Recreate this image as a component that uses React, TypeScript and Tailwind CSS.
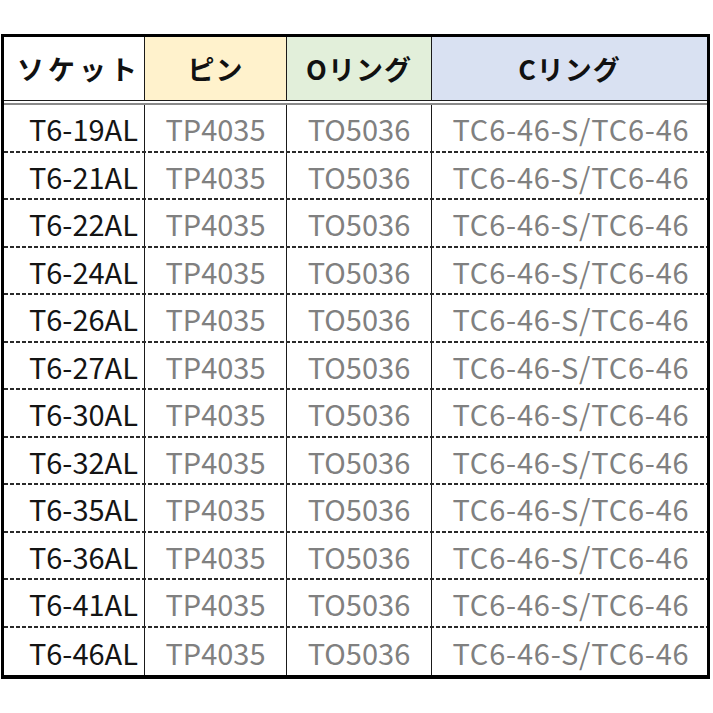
const SOCKETS = [
  'T6-19AL',
  'T6-21AL',
  'T6-22AL',
  'T6-24AL',
  'T6-26AL',
  'T6-27AL',
  'T6-30AL',
  'T6-32AL',
  'T6-35AL',
  'T6-36AL',
  'T6-41AL',
  'T6-46AL',
]

const PIN = 'TP4035'
const O_RING = 'TO5036'
const C_RING = 'TC6-46-S/TC6-46'

const FONT = "font-['Noto_Sans_CJK_JP','Noto_Sans',sans-serif]"

function DashLine() {
  return <div className="h-[2px] w-full shrink-0 bg-[repeating-linear-gradient(90deg,#2a2a2a_0px,#2a2a2a_4px,transparent_4px,transparent_6px)]" />
}

export default function App() {
  return (
    <div className={`h-[713px] w-[713px] bg-white pt-[34px] pl-[1px] ${FONT}`}>
      <div className="flex h-[645px] w-[709px] flex-col border-[3px] border-b-4 border-black bg-white">
        {/* header */}
        <div className="flex h-[64px] shrink-0 border-b border-[#1e1e1e] text-[27px] font-semibold leading-none text-[#111]">
          <div className="flex w-[141px] items-center border-r border-[#1a1a1a] pl-[13px] tracking-[4px]">ソケット</div>
          <div className="flex w-[142px] items-center justify-center border-r border-[#1a1a1a] bg-[#fff2cc] tracking-[1px]">ピン</div>
          <div className="flex w-[145px] items-center justify-center border-r border-[#1a1a1a] bg-[#e2efda] tracking-[1px]">Oリング</div>
          <div className="flex flex-1 items-center justify-center bg-[#d9e1f2] tracking-[1px]">Cリング</div>
        </div>
        <div className="h-[2px] shrink-0 bg-white" />
        <div className="h-[2px] shrink-0 bg-[#8a8a8a]" />

        {/* rows */}
        <div className="flex flex-1 flex-col">
          {SOCKETS.map((s, i) => (
            <div key={s} className="flex flex-1 flex-col">
              <div className="flex flex-1 text-[29px] leading-none">
                <div className="flex w-[141px] items-center justify-end border-r border-[#1a1a1a] pr-[6px] pt-[2px] text-[#141414]">{s}</div>
                <div className="flex w-[142px] items-center justify-center border-r border-[#1a1a1a] pt-[2px] text-[#808080]">{PIN}</div>
                <div className="flex w-[145px] items-center justify-center border-r border-[#1a1a1a] pt-[2px] text-[#808080]">{O_RING}</div>
                <div className="flex flex-1 items-center justify-center pt-[2px] pl-[3px] tracking-[0.8px] text-[#808080]">{C_RING}</div>
              </div>
              {i < SOCKETS.length - 1 && <DashLine />}
            </div>
          ))}
        </div>
      </div>
    </div>
  )
}
